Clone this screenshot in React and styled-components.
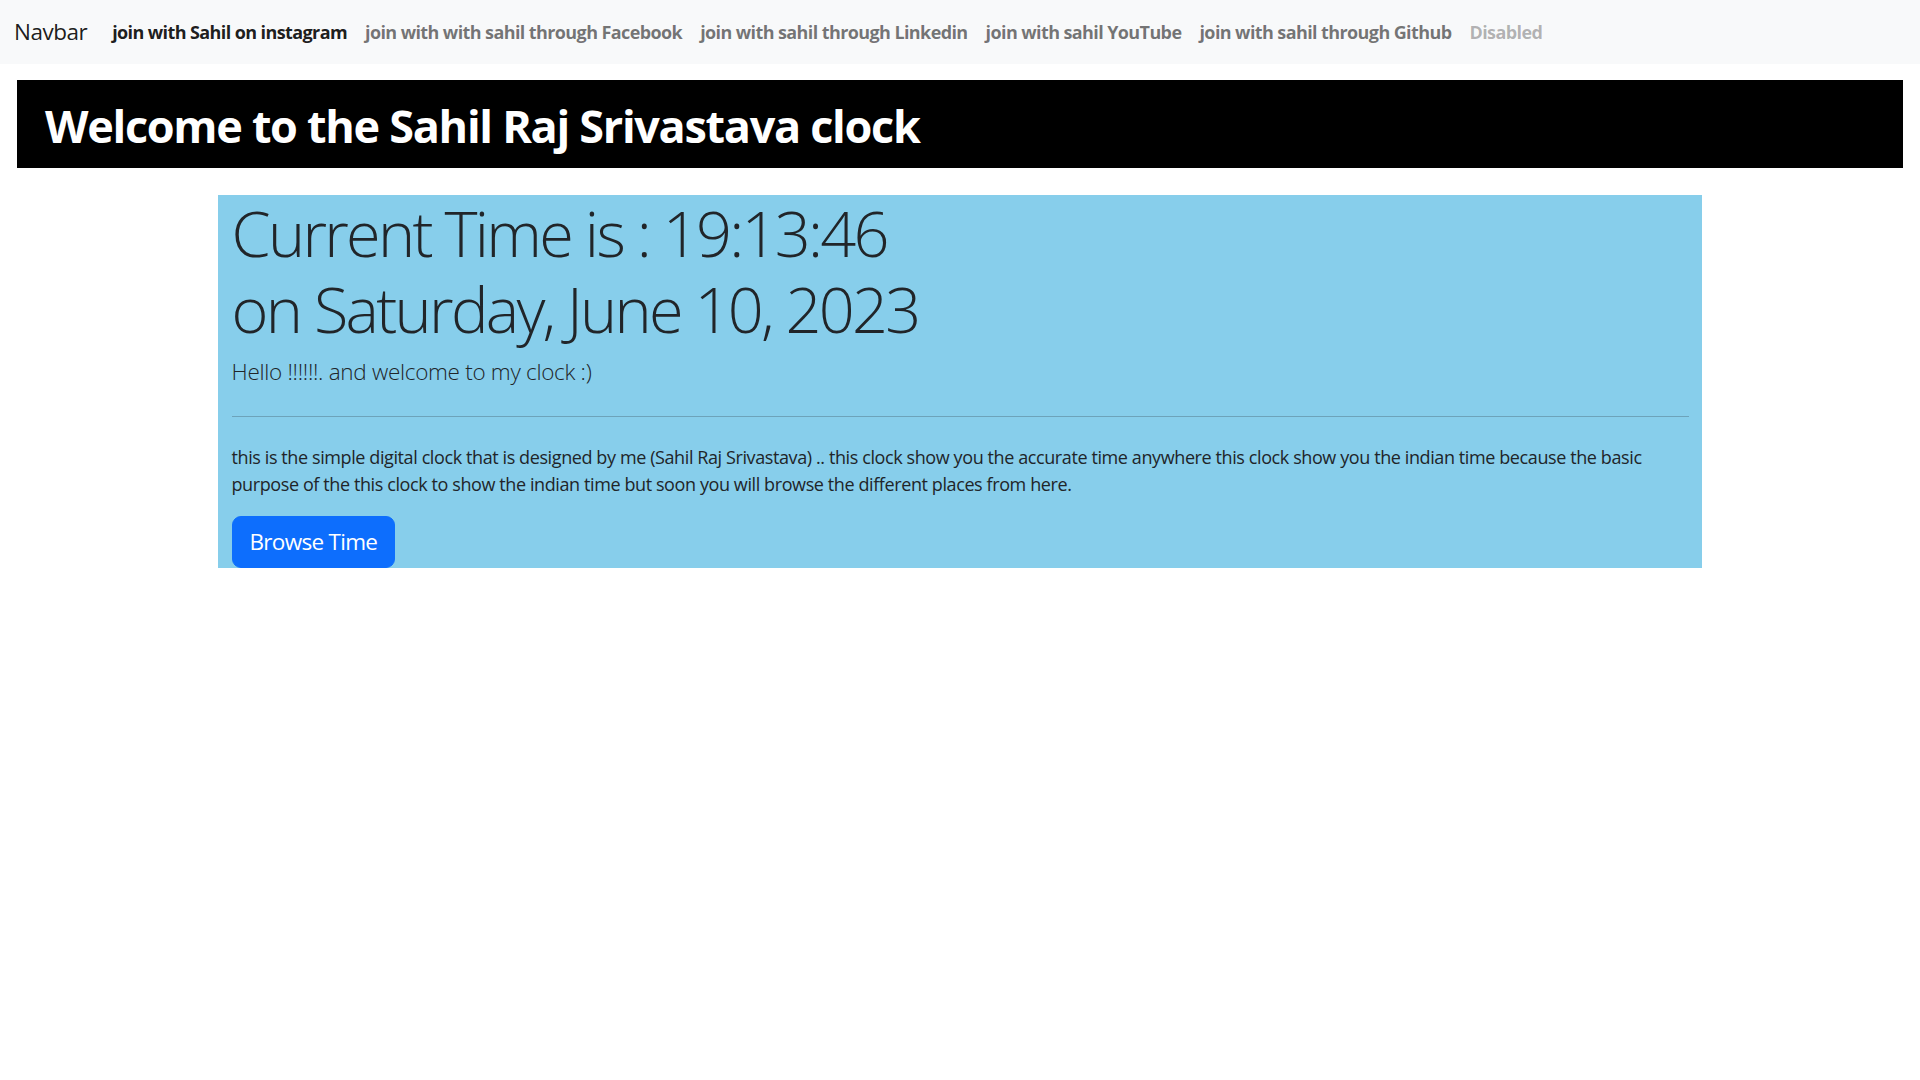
import React from 'react';
import styled, { createGlobalStyle } from 'styled-components';

const GlobalStyle = createGlobalStyle`
  body {
    margin: 0;
    background: #fff;
    color: #212529;
    font-family: "Open Sans", "Noto Sans", sans-serif;
    font-size: 18px;
    line-height: 1.5;
  }
  * { box-sizing: border-box; }
`;

const links = [
  { label: 'join with Sahil on instagram', active: true },
  { label: 'join with with sahil through Facebook' },
  { label: 'join with sahil through Linkedin' },
  { label: 'join with sahil YouTube' },
  { label: 'join with sahil through Github' },
  { label: 'Disabled', disabled: true },
];

const App = () => {
  return (
    <>
      <GlobalStyle />
      <Navbar>
        <Brand href="#">Navbar</Brand>
        <NavList>
          {links.map((l) => (
            <li key={l.label}>
              <NavLink href="#" $active={l.active} $disabled={l.disabled}>
                {l.label}
              </NavLink>
            </li>
          ))}
        </NavList>
      </Navbar>

      <Banner>
        <h1>Welcome to the Sahil Raj Srivastava clock</h1>
      </Banner>

      <ClockCard>
        <Display>
          Current Time is : 19:13:46
          <br />
          on Saturday, June 10, 2023
        </Display>
        <Lead>Hello !!!!!!. and welcome to my clock :)</Lead>
        <Divider />
        <Text>
          this is the simple digital clock that is designed by me (Sahil Raj Srivastava) .. this clock show you the accurate time anywhere this clock show you the indian time because the basic purpose of the this clock to show the indian time but soon you will browse the different places from here.
        </Text>
        <Button>Browse Time</Button>
      </ClockCard>
    </>
  );
};

const Navbar = styled.nav`
  display: flex;
  align-items: center;
  height: 64px;
  padding: 0 14px;
  background-color: #f8f9fa;
`;

const Brand = styled.a`
  font-size: 22.5px;
  letter-spacing: -0.5px;
  color: rgba(0, 0, 0, 0.9);
  text-decoration: none;
  margin-right: 16px;
  font-weight: 400;
`;

const NavList = styled.ul`
  display: flex;
  list-style: none;
  margin: 0;
  padding: 0;
`;

const NavLink = styled.a`
  display: block;
  padding: 8px 9px;
  font-size: 18px;
  font-weight: 700;
  letter-spacing: -0.6px;
  text-decoration: none;
  color: ${(p) =>
    p.$active ? 'rgba(0, 0, 0, 0.9)' : p.$disabled ? 'rgba(0, 0, 0, 0.3)' : 'rgba(0, 0, 0, 0.55)'};
`;

const Banner = styled.div`
  margin: 16px 17px 0;
  padding: 19px 28px 15px;
  background-color: #000;

  h1 {
    margin: 0;
    color: #fff;
    font-size: 45px;
    font-weight: 700;
    letter-spacing: -1.3px;
    line-height: 54px;
  }
`;

const ClockCard = styled.div`
  width: 1484px;
  margin: 27px auto 0;
  padding: 0 13.5px;
  background-color: skyblue;
`;

const Display = styled.h1`
  margin: 0 0 9px;
  font-size: 63px;
  font-weight: 300;
  letter-spacing: -2.7px;
  line-height: 1.2;
`;

const Lead = styled.p`
  margin: 0;
  font-size: 22.5px;
  font-weight: 300;
  letter-spacing: -0.3px;
  line-height: 1.5;
`;

const Divider = styled.hr`
  margin: 27px 0;
  border: 0;
  border-top: 1px solid #212529;
  opacity: 0.25;
`;

const Text = styled.p`
  margin: 0 0 18px;
  font-size: 18px;
  letter-spacing: -0.4px;
  line-height: 27px;
`;

const Button = styled.button`
  display: block;
  padding: 8px 17px;
  font-family: inherit;
  font-size: 22.5px;
  letter-spacing: -0.7px;
  line-height: 34px;
  color: #fff;
  background-color: #0d6efd;
  border: 1px solid #0d6efd;
  border-radius: 9px;
  cursor: pointer;
`;

export default App;
